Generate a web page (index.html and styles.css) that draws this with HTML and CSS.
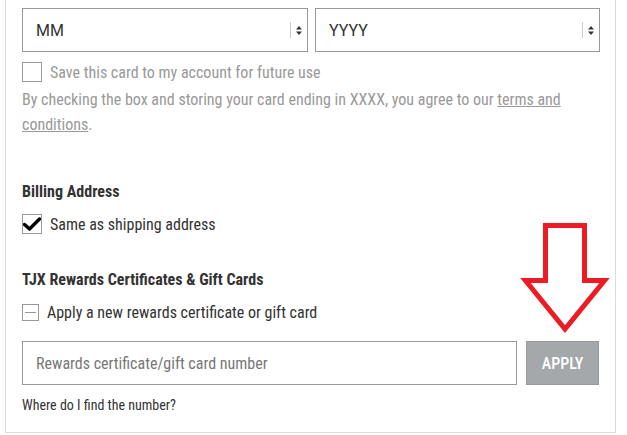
FILE: index.html
```html
<!DOCTYPE html>
<html>
<head>
<meta charset="utf-8">
<link rel="stylesheet" href="styles.css">
</head>
<body>
<div class="card">
  <div class="date-row">
    <div class="select"><span class="select-value">MM</span><span class="select-arrow"><i class="sep"></i><svg width="6" height="9" viewBox="0 0 6 9"><path d="M0 3.5 L3 0 L6 3.5 Z M0 5.5 L3 9 L6 5.5 Z" fill="#333"/></svg></span></div>
    <div class="select"><span class="select-value">YYYY</span><span class="select-arrow"><i class="sep"></i><svg width="6" height="9" viewBox="0 0 6 9"><path d="M0 3.5 L3 0 L6 3.5 Z M0 5.5 L3 9 L6 5.5 Z" fill="#333"/></svg></span></div>
  </div>
  <label class="check-row save-row"><span class="box"></span><span class="muted">Save this card to my account for future use</span></label>
  <p class="note">By checking the box and storing your card ending in XXXX, you agree to our <a class="link" href="#">terms and conditions</a>.</p>

  <h3 class="heading billing">Billing Address</h3>
  <label class="check-row"><span class="box checked"><svg width="18" height="14" viewBox="0 0 18 14"><path d="M1.5 7.5 L6.5 12 L16.5 2" fill="none" stroke="#000" stroke-width="3.4" stroke-linecap="round" stroke-linejoin="round"/></svg></span><span class="dark">Same as shipping address</span></label>

  <h3 class="heading rewards">TJX Rewards Certificates &amp; Gift Cards</h3>
  <label class="check-row small-row"><span class="box small"><i class="dash"></i></span><span class="dark">Apply a new rewards certificate or gift card</span></label>

  <div class="apply-row">
    <div class="input"><span class="placeholder">Rewards certificate/gift card number</span></div>
    <button class="apply">APPLY</button>
  </div>
  <p class="help">Where do I find the number?</p>
</div>
<svg class="arrow" width="90" height="120" viewBox="0 0 90 120">
  <path d="M25.5 5.5 L64.5 5.5 L64.5 60.5 L84.5 60.5 L45 109 L5.5 60.5 L25.5 60.5 Z" fill="none" stroke="#ed1c24" stroke-width="5" stroke-linejoin="miter"/>
</svg>
</body>
</html>
```
FILE: styles.css
```css
html, body {
  margin: 0;
  padding: 0;
  background: #fff;
}
body {
  font-family: Roboto, "Liberation Sans", sans-serif;
  font-stretch: condensed;
  position: relative;
  width: 627px;
  height: 435px;
  overflow: hidden;
}
.card {
  margin-left: 5px;
  width: 611px;
  height: 433px;
  box-sizing: border-box;
  border: 1px solid #dcdcdc;
  border-top: none;
  padding: 8px 16px 0 16px;
}
.date-row {
  display: grid;
  grid-template-columns: 286px 285px;
  column-gap: 7px;
}
.select {
  height: 44px;
  box-sizing: border-box;
  border: 1px solid #999;
  display: flex;
  align-items: center;
  padding-left: 13px;
  color: #333;
  font-size: 16px;
}
.select-value {
  flex: 1;
  font-stretch: normal;
}
.select-arrow {
  display: flex;
  align-items: center;
  gap: 5px;
  padding-right: 5px;
}
.sep {
  display: block;
  width: 1px;
  height: 16px;
  background: #ccc;
}
.check-row {
  display: flex;
  align-items: center;
  gap: 8px;
  font-size: 16px;
}
.save-row {
  margin-top: 10px;
}
.box {
  width: 20px;
  height: 20px;
  box-sizing: border-box;
  border: 1px solid #999;
  display: flex;
  align-items: center;
  justify-content: center;
  flex: none;
}
.box.small {
  width: 17px;
  height: 17px;
}
.dash {
  display: block;
  width: 11px;
  height: 1px;
  background: #999;
}
.muted {
  color: #999;
}
.dark {
  color: #333;
}
.note {
  margin: 5px 0 0 0;
  font-size: 16px;
  line-height: 25px;
  color: #999;
}
.link {
  color: #999;
  text-decoration: underline;
}
.heading {
  margin: 0;
  font-size: 16px;
  font-weight: 700;
  color: #333;
  line-height: 20px;
}
.billing {
  margin-top: 45px;
  margin-bottom: 12px;
}
.rewards {
  margin-top: 36px;
  margin-bottom: 13px;
}
.small-row {
  gap: 8px;
}
.apply-row {
  display: flex;
  gap: 9px;
  margin-top: 19px;
}
.input {
  width: 496px;
  height: 44px;
  box-sizing: border-box;
  border: 1px solid #999;
  display: flex;
  align-items: center;
  padding-left: 13px;
  font-size: 16px;
  color: #777;
}
.apply {
  width: 73px;
  height: 44px;
  border: 1px solid #999;
  background: #a4a8ab;
  color: #fff;
  font-family: inherit;
  font-stretch: condensed;
  font-size: 16px;
  font-weight: 500;
  padding: 0;
}
.help {
  margin: 12px 0 0 0;
  font-size: 14px;
  color: #333;
}
.arrow {
  position: absolute;
  left: 520px;
  top: 220px;
}
```
